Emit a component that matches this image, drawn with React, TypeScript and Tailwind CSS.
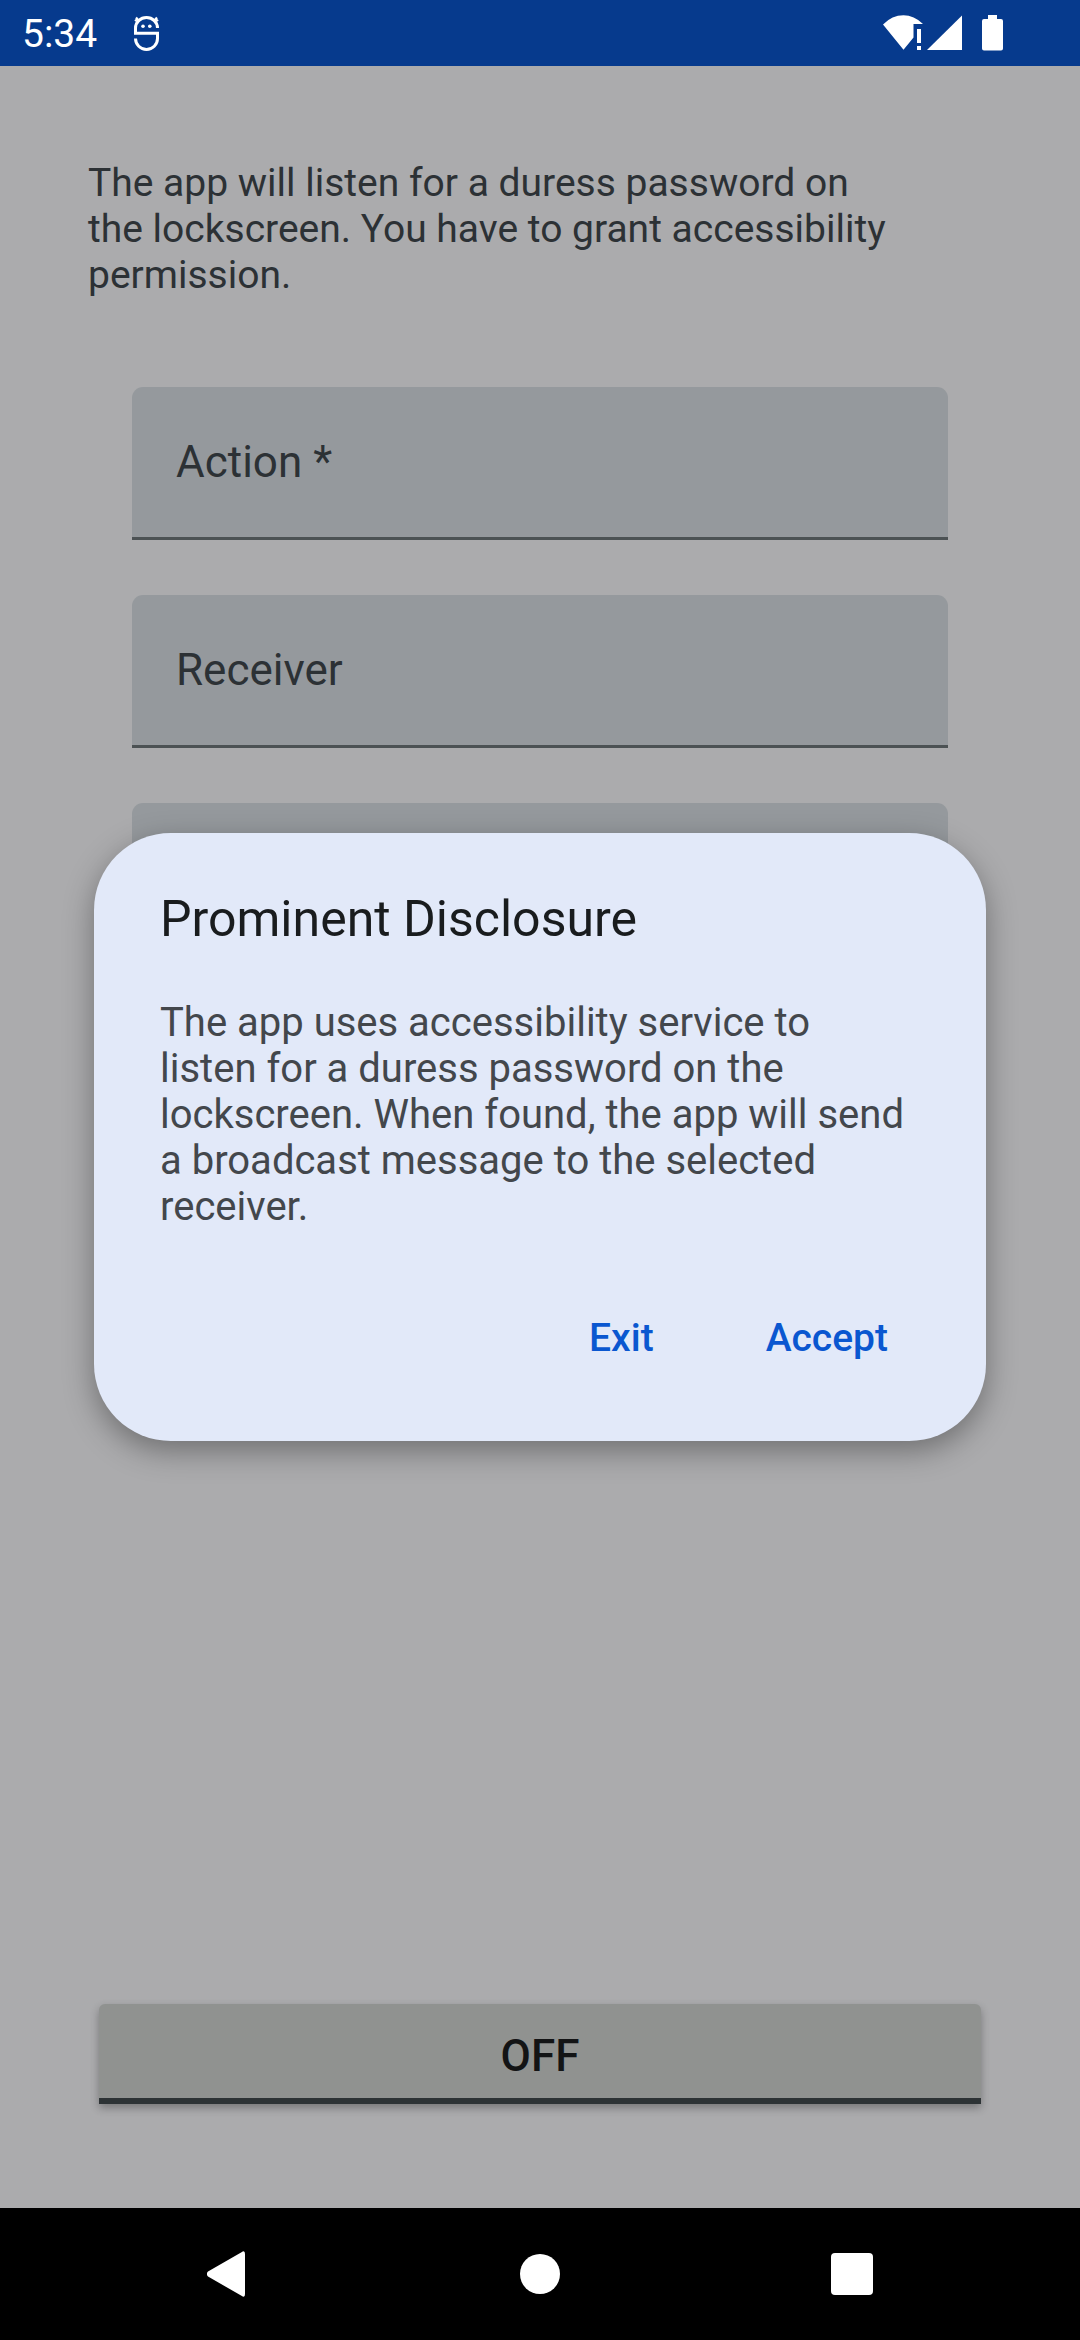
import React from "react";

function DroidIcon() {
  return (
    <svg viewBox="0 0 28 38" className="h-[38px] w-7" fill="none" stroke="white" aria-hidden="true">
      <path d="M6.5 7.5 L3 3.5 M20.5 7.5 L24 3.5 M2 7 L5 4.5 M25 7 L22 4.5" strokeWidth="2.2" />
      <path d="M24.5 14 A11 10.5 0 0 0 2.5 14 V19.2 H24.5 V24.5 A11 11 0 0 1 2.5 24.5" strokeWidth="3" />
      <circle cx="10" cy="12.3" r="1.8" fill="white" stroke="none" />
      <circle cx="16.8" cy="12.3" r="1.8" fill="white" stroke="none" />
    </svg>
  );
}

function StatusIcons() {
  return (
    <div className="flex items-center text-white" aria-hidden="true">
      <svg viewBox="0 0 40 36" className="h-9 w-10" fill="white">
        <path d="M0 9.5 Q9 .3 20.5 .3 Q31 .3 40 9 H30.5 V22.5 L20.5 34.7 Z" />
        <path d="M34 14 H38 V28 H34 Z M34 31 H38 V35 H34 Z" />
      </svg>
      <svg viewBox="0 0 35 36" className="ml-1 h-9 w-[35px]" fill="white">
        <path d="M35 .5 V35 H0 Z" />
      </svg>
      <svg viewBox="0 0 21 36" className="ml-5 h-9 w-[21px]" fill="white">
        <path d="M6 0 H15 V4 H19 Q21 4 21 6 V33.5 Q21 35.5 19 35.5 H2 Q0 35.5 0 33.5 V6 Q0 4 2 4 H6 Z" />
      </svg>
    </div>
  );
}

function Field({ label }: { label: string }) {
  return (
    <input
      type="text"
      aria-label={label}
      placeholder={label}
      className="block h-[153px] w-full rounded-t-[11px] border-b-[3px] border-[#4c5254] bg-[#95999d] px-11 text-[44px] text-[#2c3135] outline-none placeholder:text-[#2c3135] placeholder:opacity-100"
    />
  );
}

export default function App() {
  return (
    <div className="relative flex min-h-screen flex-col bg-[#ababad] font-['Roboto',sans-serif]">
      <header className="flex h-[66px] items-center bg-[#063a8d] pr-[77px] pl-[22px]">
        <time className="mr-9 pt-0.5 text-[39px] leading-[46px] text-white">5:34</time>
        <DroidIcon />
        <div className="ml-auto">
          <StatusIcons />
        </div>
      </header>

      <main className="flex flex-1 flex-col px-[88px] pt-[94px] pb-[104px]">
        <p className="pr-[94px] text-[39px] leading-[46px] text-[#2c3135]">
          The app will listen for a duress password on the lockscreen. You have to grant accessibility permission.
        </p>
        <form className="mt-[89px] flex flex-col gap-[55px] px-11">
          <Field label="Action *" />
          <Field label="Receiver" />
          <Field label="Authentication code" />
        </form>
        <div className="mt-auto px-[11px]">
          <button
            type="button"
            className="block h-[100px] w-full rounded-t-[6px] border-b-[6px] border-[#2d3335] bg-[#909290] pt-[10px] text-center text-[44px] leading-[52px] font-medium text-[#131415] shadow-[0_4px_8px_rgba(0,0,0,0.3)]"
          >
            OFF
          </button>
        </div>
      </main>

      <nav className="flex h-[132px] items-center justify-between bg-black px-[207px]">
        <button type="button" aria-label="Back">
          <svg viewBox="0 0 42 46" className="h-[46px] w-[42px]" fill="white">
            <path d="M34.5 1.2 Q38 -1.5 38 3 V43 Q38 47.5 34.5 44.8 L1 25.5 Q-1.5 23 1 20.5 Z" />
          </svg>
        </button>
        <button type="button" aria-label="Home" className="size-10 rounded-full bg-white" />
        <button type="button" aria-label="Recent apps" className="size-[42px] rounded-[4px] bg-white" />
      </nav>

      <div className="absolute inset-0 flex items-center px-[94px] pb-[66px]">
        <section
          role="dialog"
          aria-modal="true"
          aria-labelledby="dialog-title"
          className="w-full rounded-[77px] bg-[#e2e9f9] px-[66px] pt-14 pb-[43px] shadow-[0_10px_30px_rgba(0,0,0,0.35)]"
        >
          <h1 id="dialog-title" className="text-[50px] leading-[60px] text-[#191c1e]">
            Prominent Disclosure
          </h1>
          <p className="mt-[51px] text-[40px] leading-[46px] text-[#43474c]">
            The app uses accessibility service to
            <br />
            listen for a duress password on the
            <br />
            lockscreen. When found, the app will send
            <br />
            a broadcast message to the selected
            <br />
            receiver.
          </p>
          <div className="mt-12 flex justify-end gap-12">
            <button type="button" className="h-[120px] px-8 text-[39px] font-medium text-[#0a57d0]">
              Exit
            </button>
            <button type="button" className="h-[120px] px-8 text-[39px] font-medium text-[#0a57d0]">
              Accept
            </button>
          </div>
        </section>
      </div>
    </div>
  );
}
